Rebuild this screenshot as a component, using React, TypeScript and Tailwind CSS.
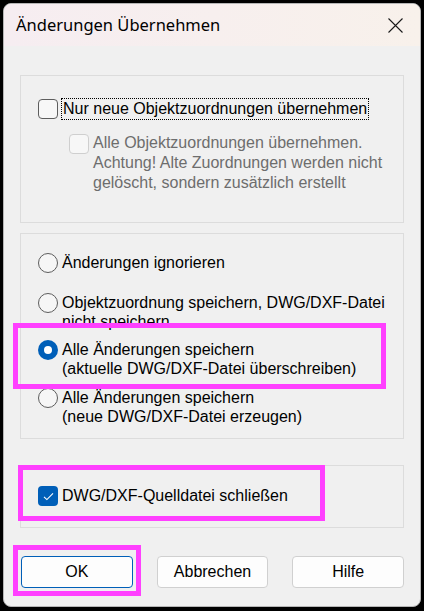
import React from 'react';

const font = "font-['Liberation_Sans',Arial,sans-serif]";

const Radio = ({ checked = false }: { checked?: boolean }) =>
  checked ? (
    <div className="w-[20px] h-[20px] shrink-0 rounded-full bg-[#005fb8] flex items-center justify-center">
      <div className="w-[8px] h-[8px] rounded-full bg-white" />
    </div>
  ) : (
    <div className="w-[20px] h-[20px] shrink-0 rounded-full border border-[#5d5d5d] bg-[#f6f6f6]" />
  );

const Box = ({ checked = false, disabled = false }: { checked?: boolean; disabled?: boolean }) => {
  if (checked)
    return (
      <div className="w-[20px] h-[20px] shrink-0 rounded-[4px] bg-[#005fb8] flex items-center justify-center">
        <svg width="11" height="9" viewBox="0 0 11 9" fill="none">
          <path d="M1 4.8 L3.9 7.6 L10 1.4" stroke="white" strokeWidth="1.1" />
        </svg>
      </div>
    );
  return (
    <div
      className={
        disabled
          ? 'w-[20px] h-[20px] shrink-0 rounded-[4px] border border-[#cfcfcf] bg-[#f7f7f7]'
          : 'w-[20px] h-[20px] shrink-0 rounded-[4px] border border-[#5d5d5d] bg-[#f7f7f7]'
      }
    />
  );
};

const Button = ({ label, primary = false }: { label: string; primary?: boolean }) => (
  <button
    className={
      'w-[112px] h-[32px] rounded-[4px] bg-[#fdfdfd] text-[16px] text-black flex items-center justify-center ' +
      (primary ? 'border border-[#005fb8]' : 'border border-[#d0d0d0]')
    }
  >
    {label}
  </button>
);

export default function App() {
  return (
    <div className={`relative w-[424px] h-[611px] bg-black pl-[3px] pt-[3px] pr-[3px] pb-[4px] ${font}`}>
      <div className="w-full h-full rounded-[8px] border border-[#b5b5b5] bg-[#f0f0f0] overflow-hidden flex flex-col">
        {/* title bar */}
        <div className="h-[42px] shrink-0 flex items-center justify-between pl-[12px] pr-[17px] bg-gradient-to-r from-[#f6edf1] to-[#f8f1eb]">
          <span className="font-['Noto_Sans',sans-serif] text-[16.5px] text-black leading-none">Änderungen Übernehmen</span>
          <svg width="15" height="15" viewBox="0 0 15 15">
            <path d="M0.5 0.5 L14.5 14.5 M14.5 0.5 L0.5 14.5" stroke="#1a1a1a" strokeWidth="1.1" />
          </svg>
        </div>

        <div className="flex flex-col px-[16px] pt-[29px]">
          {/* group 1 */}
          <div className="border border-[#dcdcdc] pl-[17px] pt-[22px] pb-[29px]">
            <div className="flex items-center gap-[3px]">
              <Box />
              <span className="border border-dotted border-black px-[1px] text-[16px] leading-[20px] text-black">
                Nur neue Objektzuordnungen übernehmen
              </span>
            </div>
            <div className="flex items-start gap-[4px] ml-[31px] mt-[13px]">
              <div className="mt-[1px]">
                <Box disabled />
              </div>
              <span className="text-[16px] leading-[20px] text-[#6d6d6d]">
                Alle Objektzuordnungen übernehmen.
                <br />
                Achtung! Alte Zuordnungen werden nicht
                <br />
                gelöscht, sondern zusätzlich erstellt
              </span>
            </div>
          </div>

          {/* group 2 */}
          <div className="mt-[10px] border border-[#dcdcdc] pl-[17px] pt-[19px] pb-[12px] text-[16px] text-black">
            <div className="flex items-center gap-[4px] leading-[20px]">
              <Radio />
              <span>Änderungen ignorieren</span>
            </div>
            <div className="flex items-start gap-[4px] leading-[19px] mt-[20px]">
              <Radio />
              <span>
                Objektzuordnung speichern, DWG/DXF-Datei
                <br />
                nicht speichern
              </span>
            </div>
            <div className="flex items-start gap-[4px] leading-[19px] mt-[9px]">
              <Radio checked />
              <span>
                Alle Änderungen speichern
                <br />
                (aktuelle DWG/DXF-Datei überschreiben)
              </span>
            </div>
            <div className="flex items-start gap-[4px] leading-[19px] mt-[10px]">
              <Radio />
              <span>
                Alle Änderungen speichern
                <br />
                (neue DWG/DXF-Datei erzeugen)
              </span>
            </div>
          </div>

          {/* group 3 */}
          <div className="mt-[26px] border border-[#dcdcdc] pl-[17px] pt-[20px] pb-[21px]">
            <div className="flex items-center gap-[4px] text-[16px] leading-[20px] text-black">
              <Box checked />
              <span>DWG/DXF-Quelldatei schließen</span>
            </div>
          </div>

          {/* buttons */}
          <div className="mt-[28px] flex gap-[24px] pl-[1px]">
            <Button label="OK" primary />
            <Button label="Abbrechen" />
            <Button label="Hilfe" />
          </div>
        </div>
      </div>

      {/* annotation frames */}
      <div className="absolute left-[13px] top-[323px] w-[373px] h-[66px] border-[5px] border-[#ff40ff]" />
      <div className="absolute left-[18px] top-[465px] w-[307px] h-[56px] border-[5px] border-[#ff40ff]" />
      <div className="absolute left-[13px] top-[545px] w-[128px] h-[51px] border-[5px] border-[#ff40ff]" />
    </div>
  );
}
